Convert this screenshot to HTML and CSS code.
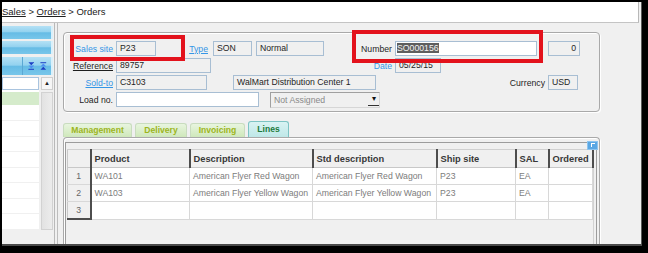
FILE: index.html
```html
<!doctype html>
<html lang="en">
<head>
    <meta charset="UTF-8" />
    <title>Orders</title>
    <link rel="stylesheet" href="styles.css">
</head>
<body>
<div class="window">
    <div class="crumbs"><a href="#">Sales</a> &gt; <a href="#">Orders</a> &gt; Orders</div>
    <div class="workspace">
        <aside class="sidebar">
            <div class="bar"></div>
            <div class="bar"></div>
            <div class="bar bar-tools">
                <span class="tool-sep"></span>
                <svg class="tool" width="8" height="10" viewBox="0 0 8 10">
                    <path d="M0.5 0.5h7L4 4z" fill="#1d3fc4"/>
                    <path d="M0.5 4.5h7L4 8z" fill="#4d8ff0"/>
                    <path d="M0.5 9h7" stroke="#1d3fc4" stroke-width="1.2"/>
                </svg>
                <svg class="tool" width="8" height="10" viewBox="0 0 8 10">
                    <path d="M0.5 1h7" stroke="#1d3fc4" stroke-width="1.2"/>
                    <path d="M0.5 5.5h7L4 2z" fill="#4d8ff0"/>
                    <path d="M0.5 9.5h7L4 6z" fill="#1d3fc4"/>
                </svg>
            </div>
            <div class="list">
                <div class="list-rows">
                    <div class="list-search"></div>
                    <div class="list-row is-selected"></div>
                    <div class="list-row"></div>
                    <div class="list-row"></div>
                    <div class="list-row"></div>
                    <div class="list-row"></div>
                    <div class="list-row"></div>
                    <div class="list-row"></div>
                    <div class="list-row"></div>
                    <div class="list-row"></div>
                </div>
                <div class="scroll">
                    <div class="scroll-btn">&#9650;</div>
                    <div class="scroll-thumb"></div>
                </div>
            </div>
        </aside>
        <main class="content">
            <div class="group header-box">
                <div class="row">
                    <span class="lbl lbl-main link-plain">Sales site</span>
                    <span class="fld w-site">P23</span>
                    <span class="lbl lbl-type"><a href="#" class="link">Type</a></span>
                    <span class="fld w-code">SON</span>
                    <span class="fld w-mode gap4">Normal</span>
                    <span class="lbl lbl-number">Number</span>
                    <span class="fld fld-edit w-number"><span class="selected">SO000156</span></span>
                    <span class="fld w-count gap11">0</span>
                </div>
                <div class="row">
                    <span class="lbl lbl-main"><a href="#" class="link-dark">Reference</a></span>
                    <span class="fld w-ref">89757</span>
                    <span class="lbl lbl-date link-plain">Date</span>
                    <span class="fld w-date">05/25/15</span>
                </div>
                <div class="row">
                    <span class="lbl lbl-main"><a href="#" class="link">Sold-to</a></span>
                    <span class="fld w-customer">C3103</span>
                    <span class="fld w-name gap26">WalMart Distribution Center 1</span>
                    <span class="lbl lbl-currency">Currency</span>
                    <span class="fld w-currency">USD</span>
                </div>
                <div class="row">
                    <span class="lbl lbl-main">Load no.</span>
                    <span class="fld fld-edit w-load"></span>
                    <span class="combo gap11">Not Assigned<span class="combo-btn">&#9662;</span></span>
                </div>
                <span class="mark mark-site"></span>
                <span class="mark mark-number"></span>
            </div>

            <div class="tabs">
                <span class="tab w-tab1">Management</span>
                <span class="tab w-tab2">Delivery</span>
                <span class="tab w-tab3">Invoicing</span>
                <span class="tab tab-active w-tab4">Lines</span>
            </div>

            <div class="group lines-box">
                <div class="grid-frame">
                    <span class="grid-icon"></span>
                    <div class="grid-body">
                        <table class="grid">
                            <colgroup>
                                <col class="c-num"><col class="c-product"><col class="c-desc"><col class="c-std"><col class="c-site"><col class="c-unit"><col class="c-qty">
                            </colgroup>
                            <thead>
                                <tr><th></th><th>Product</th><th>Description</th><th>Std description</th><th>Ship site</th><th>SAL</th><th>Ordered</th></tr>
                            </thead>
                            <tbody>
                                <tr><td class="num">1</td><td>WA101</td><td>American Flyer Red Wagon</td><td>American Flyer Red Wagon</td><td>P23</td><td>EA</td><td></td></tr>
                                <tr><td class="num">2</td><td>WA103</td><td>American Flyer Yellow Wagon</td><td>American Flyer Yellow Wagon</td><td>P23</td><td>EA</td><td></td></tr>
                                <tr class="last"><td class="num">3</td><td></td><td></td><td></td><td></td><td></td><td></td></tr>
                            </tbody>
                        </table>
                    </div>
                </div>
            </div>
        </main>
    </div>
</div>
</body>
</html>
```

FILE: styles.css
```css
html,body {
    margin: 0;
    padding: 0;
}
body {
    background: #000;
    font-family: "Liberation Sans", Arial, sans-serif;
    font-size: 8.7px;
    color: #1e1e1e;
    width: 648px;
    height: 253px;
    overflow: hidden;
}
.window {
    margin: 2px 0 0 2px;
    width: 640px;
    height: 244px;
    box-sizing: border-box;
    background: #f0f0f0;
    border-right: 1px solid #5a5a5a;
    border-bottom: 2px solid #4a4a4a;
    display: flex;
    flex-direction: column;
    overflow: hidden;
}
.crumbs {
    height: 20px;
    line-height: 20px;
    background: #fff;
    border-bottom: 1px solid #c4c4c4;
    border-right: 1px solid #b8b8b8;
    margin-right: 2px;
    font-size: 9.5px;
    color: #202020;
    white-space: nowrap;
}
.crumbs a {
    color: inherit;
    text-decoration: underline;
}
.workspace {
    display: flex;
    flex: 1;
    min-height: 0;
}

/* left navigation panel */
.sidebar {
    width: 53px;
    box-sizing: border-box;
    border-right: 1px solid #b9b9b9;
    padding: 3px 1px 0 0;
    display: flex;
    flex-direction: column;
    flex: none;
}
.bar {
    height: 13px;
    margin-bottom: 2px;
    background: linear-gradient(#b4e1f5, #93d2ef 45%, #66bce5 52%, #78c6ea);
    box-shadow: inset -2px 0 0 #d9f0fa;
}
.bar-tools {
    height: 18px;
    margin-top: 1px;
    display: flex;
    align-items: center;
}
.tool-sep {
    width: 1px;
    height: 100%;
    background: #5aa8d4;
    margin-left: 20px;
    margin-right: 5px;
}
.tool {
    display: block;
    margin-right: 6px;
}
.list {
    display: flex;
    gap: 2px;
    height: 153px;
}
.list-rows {
    width: 37px;
    background: #fff;
    display: flex;
    flex-direction: column;
}
.list-search {
    height: 13px;
    box-sizing: border-box;
    border: 1px solid #a9c4df;
    background: #fff;
    margin-bottom: 2px;
}
.list-row {
    height: 15px;
    border-bottom: 1px solid #f0f0f0;
}
.list-row.is-selected {
    height: 14px;
    background: #d5ebcb;
    border-bottom: none;
}
.scroll {
    width: 12px;
    display: flex;
    flex-direction: column;
}
.scroll-btn {
    height: 13px;
    box-sizing: border-box;
    border: 1px solid #cfcfcf;
    background: #f6f6f6;
    font-size: 6px;
    line-height: 11px;
    text-align: center;
    color: #222;
}
.scroll-thumb {
    flex: 1;
    margin-top: 2px;
    border: 1px solid #d2d2d2;
    background: linear-gradient(90deg, #e2e2e2, #ececec);
}

/* main form */
.content {
    flex: 1;
    margin-left: 2px;
    border-left: 1px solid #bdbdbd;
    padding: 9px 0 0 5px;
}
.group {
    border: 1px solid #a9a9a9;
    border-radius: 4px;
    box-shadow: inset 1px 1px 0 #fff, 1px 1px 0 #fff;
    box-sizing: border-box;
    width: 537px;
}
.header-box {
    height: 80px;
    padding-top: 8px;
    position: relative;
}
.row {
    display: flex;
    align-items: center;
    height: 15px;
    margin-bottom: 2px;
    white-space: nowrap;
}
.lbl {
    flex: none;
    box-sizing: border-box;
    text-align: right;
    padding-right: 3px;
}
.lbl-main { width: 52px; }
.lbl-type { width: 57px; padding-right: 5px; }
.lbl-number { width: 71px; }
.lbl-date { width: 184px; }
.lbl-currency { width: 172px; }
.link-plain { color: #3596e6; }
.link {
    color: #3596e6;
    text-decoration: underline;
}
.link-dark {
    color: #1e1e1e;
    text-decoration: underline;
}
.fld {
    flex: none;
    height: 15px;
    box-sizing: border-box;
    border: 1px solid #a8bed3;
    background: #f0f0f0;
    padding: 0 3px;
    line-height: 13px;
    overflow: hidden;
}
.fld-edit { background: #fff; }
.selected {
    background: #5e5e5e;
    color: #f4f4f4;
}
.w-site { width: 40px; }
.w-code { width: 39px; }
.w-mode { width: 68px; }
.w-number { width: 142px; padding-left: 1px; }
.w-count { width: 32px; text-align: right; }
.w-ref { width: 95px; }
.w-date { width: 46px; }
.w-customer { width: 91px; }
.w-name { width: 143px; }
.w-currency { width: 30px; }
.w-load { width: 143px; }
.gap4 { margin-left: 4px; }
.gap11 { margin-left: 11px; }
.gap26 { margin-left: 26px; }
.combo {
    width: 110px;
    height: 16px;
    box-sizing: border-box;
    border: 1px solid #a0a0a0;
    border-right-color: #d6d6d6;
    border-bottom-color: #d6d6d6;
    color: #8a8a8a;
    padding-left: 3px;
    line-height: 14px;
    display: flex;
    align-items: center;
}
.combo-btn {
    margin-left: auto;
    width: 11px;
    height: 12px;
    line-height: 12px;
    text-align: center;
    color: #111;
    font-size: 8px;
    border-bottom: 1px solid #333;
}
.mark {
    position: absolute;
    border: 4px solid #e3121c;
    box-sizing: border-box;
}
.mark-site {
    left: 6px;
    top: 2px;
    width: 115px;
    height: 26px;
}
.mark-number {
    left: 288px;
    top: -3px;
    width: 191px;
    height: 33px;
}

/* tabs */
.tabs {
    display: flex;
    align-items: flex-end;
    gap: 3px;
    height: 16px;
    margin-top: 9px;
}
.tab {
    height: 14px;
    box-sizing: border-box;
    border: 1px solid #c9dcbf;
    border-bottom: none;
    border-radius: 3px 3px 0 0;
    background: linear-gradient(#e8f5df, #cfe8bb);
    color: #9db51c;
    font-weight: bold;
    font-size: 8.6px;
    line-height: 13px;
    text-align: center;
}
.tab-active {
    height: 16px;
    line-height: 15px;
    border-color: #7dc4c4;
    background: linear-gradient(#d8f3f3, #bfe8e8);
    color: #1c7a3c;
}
.w-tab1 { width: 69px; }
.w-tab2 { width: 52px; }
.w-tab3 { width: 55px; }
.w-tab4 { width: 41px; }

/* lines grid */
.lines-box {
    height: 130px;
    border-bottom: none;
    border-radius: 4px 4px 0 0;
}
.grid-frame {
    position: relative;
    margin: 4px 2px 0 1px;
    height: 120px;
    border: 1px solid #9c9c9c;
    border-bottom: none;
    padding: 6px 0 0 1px;
}
.grid-icon {
    position: absolute;
    right: -2px;
    top: -2px;
    width: 9px;
    height: 7px;
    background: #5aa7e4;
    border: 1px solid #8cc4ef;
}
.grid-icon::after {
    content: "";
    position: absolute;
    left: 3px;
    top: 1px;
    width: 3px;
    height: 3px;
    border-top: 1px solid #fff;
    border-left: 1px solid #fff;
}
.grid-body {
    width: 527px;
    height: 110px;
    box-sizing: border-box;
    border-right: 1px solid #d2d2d2;
}
.grid {
    border-collapse: collapse;
    table-layout: fixed;
    width: 525px;
}
.c-num { width: 23px; }
.c-product { width: 99px; }
.c-desc { width: 123px; }
.c-std { width: 124px; }
.c-site { width: 79px; }
.c-unit { width: 33px; }
.c-qty { width: 44px; }
.grid th {
    height: 17px;
    padding: 0 3px;
    background: #f0f0f0;
    border-top: 1px solid #d0d0d0;
    border-bottom: 1px solid #c8c8c8;
    border-right: 2px solid #4d4d4d;
    font-size: 9.3px;
    font-weight: bold;
    color: #383838;
    text-align: left;
    white-space: nowrap;
    overflow: hidden;
}
.grid th:first-child {
    border-left: 1px solid #c8c8c8;
}
.grid td {
    height: 16px;
    padding: 0 3px;
    background: #fff;
    border-right: 1px solid #d8d8d8;
    border-bottom: 1px solid #d8d8d8;
    color: #7c7c7c;
    white-space: nowrap;
    overflow: hidden;
}
.grid td.num {
    background: #f0f0f0;
    border-left: 1px solid #c8c8c8;
    border-right: 2px solid #4d4d4d;
    text-align: center;
    color: #666;
}
.grid tr.last td.num {
    border-bottom: 2px solid #4d4d4d;
}
```
